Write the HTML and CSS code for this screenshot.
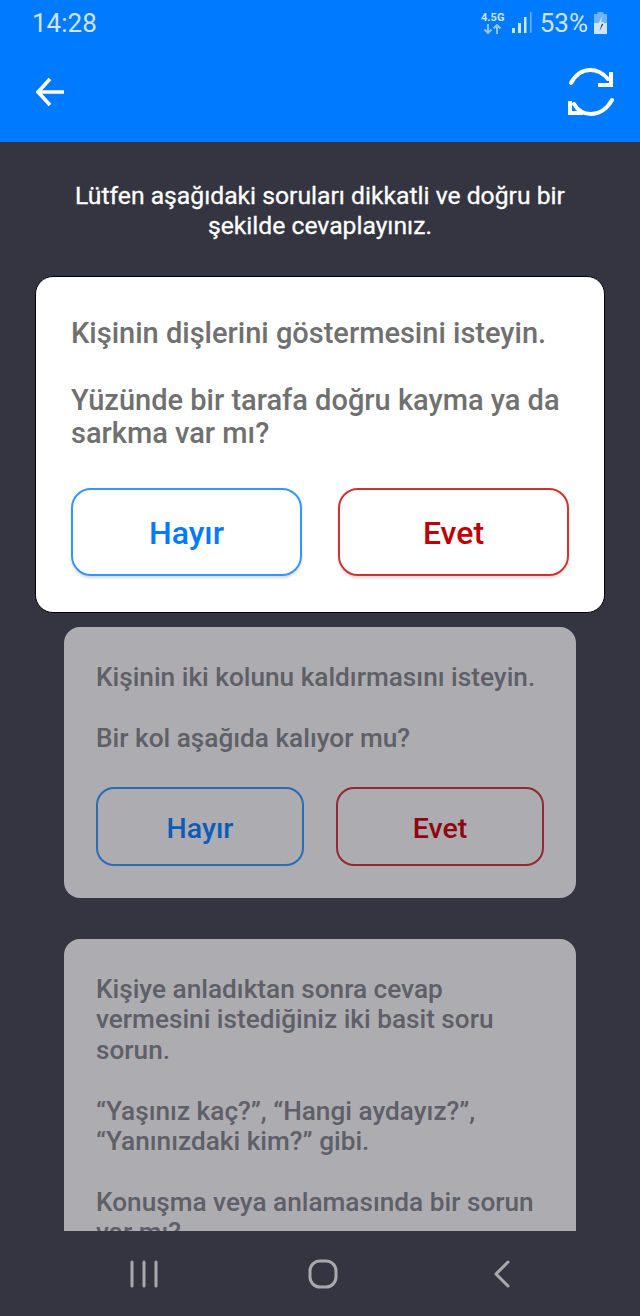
FILE: index.html
```html
<!DOCTYPE html>
<html lang="tr">
<head>
    <meta charset="UTF-8">
    <meta name="viewport" content="width=device-width, initial-scale=1.0">
    <title>Sorular</title>
    <link rel="stylesheet" href="styles.css">
</head>
<body>
    <div class="screen">
        <div class="top">
            <div class="status">
                <span class="time">14:28</span>
                <div class="status-right">
                    <div class="net">
                        <span class="net-label">4.5G</span>
                        <svg class="net-arrows" width="20" height="10" viewBox="0 0 20 10">
                            <path d="M5 0v9M1.500 5.500L5 9l3.500-3.500M14 10V1M10.500 4.500L14 1l3.500 3.500" fill="none" stroke="#8fc4ff" stroke-width="2"/>
                        </svg>
                    </div>
                    <svg class="signal" width="20" height="22" viewBox="0 0 20 22">
                        <rect x="0" y="16" width="3" height="5" fill="#cfe5ff"/>
                        <rect x="6" y="11" width="3" height="10" fill="#cfe5ff"/>
                        <rect x="12" y="5" width="2.500" height="16" fill="#cfe5ff"/>
                        <rect x="18" y="0" width="1.500" height="21" fill="#6fb2ff"/>
                    </svg>
                    <span class="battery-num">53%</span>
                    <svg class="battery" width="13" height="22" viewBox="0 0 13 22">
                        <rect x="3.500" y="0" width="6" height="2" fill="#6fb2ff"/>
                        <rect x="0" y="2" width="13" height="20" fill="#6fb2ff"/>
                        <rect x="0" y="11" width="13" height="11" fill="#cfe5ff"/>
                        <path d="M8.500 4L4 12h3l-2 7 5-9H7z" fill="#cfe5ff"/>
                        <path d="M8 11.500L5.500 19 9 12.500z" fill="#1a1a2a"/>
                    </svg>
                </div>
            </div>
            <div class="toolbar">
                <svg class="back" width="30" height="30" viewBox="0 0 30 30">
                    <path d="M2 15h26M14 2L2 15l12 13" fill="none" stroke="#fff" stroke-width="3.500"/>
                </svg>
                <svg class="refresh" width="46" height="50" viewBox="0 0 46 50">
                    <path d="M3 16C8 7 15 3 22 3c7 0 13 3 18 9" fill="none" stroke="#fff" stroke-width="4" stroke-linecap="round"/>
                    <path d="M43 5v13H30" fill="none" stroke="#fff" stroke-width="4"/>
                    <path d="M44 33c-5 9-13 14-21 14-7 0-13-3-17-10" fill="none" stroke="#fff" stroke-width="4" stroke-linecap="round"/>
                    <path d="M2 34v12h13" fill="none" stroke="#fff" stroke-width="4"/>
                </svg>
            </div>
        </div>

        <div class="content">
            <p class="intro">Lütfen aşağıdaki soruları dikkatli ve doğru bir şekilde cevaplayınız.</p>

            <div class="card card-active">
                <p class="question">Kişinin dişlerini göstermesini isteyin.</p>
                <p class="question">Yüzünde bir tarafa doğru kayma ya da sarkma var mı?</p>
                <div class="btns">
                    <div class="btn btn-no">Hayır</div>
                    <div class="btn btn-yes">Evet</div>
                </div>
            </div>

            <div class="card card-dim card-two">
                <p class="question">Kişinin iki kolunu kaldırmasını isteyin.</p>
                <p class="question">Bir kol aşağıda kalıyor mu?</p>
                <div class="btns">
                    <div class="btn btn-no">Hayır</div>
                    <div class="btn btn-yes">Evet</div>
                </div>
            </div>

            <div class="card card-dim card-three">
                <p class="question">Kişiye anladıktan sonra cevap vermesini istediğiniz iki basit soru sorun.</p>
                <p class="question">“Yaşınız kaç?”, “Hangi aydayız?”, “Yanınızdaki kim?” gibi.</p>
                <p class="question">Konuşma veya anlamasında bir sorun var mı?</p>
            </div>
        </div>

        <div class="navbar">
            <svg width="28" height="28" viewBox="0 0 28 28">
                <path d="M2 2v24M14 2v24M26 2v24" fill="none" stroke="#a9a9ad" stroke-width="3" stroke-linecap="round"/>
            </svg>
            <svg class="nav-home" width="30" height="30" viewBox="0 0 30 30">
                <rect x="2" y="2" width="26" height="26" rx="10" fill="none" stroke="#a9a9ad" stroke-width="3"/>
            </svg>
            <svg width="18" height="28" viewBox="0 0 18 28">
                <path d="M15 2L3 14l12 12" fill="none" stroke="#a9a9ad" stroke-width="3" stroke-linecap="round" stroke-linejoin="round"/>
            </svg>
        </div>
    </div>
</body>
</html>
```

FILE: styles.css
```css
*{
    margin: 0;
    padding: 0;
    box-sizing: border-box;
}
body{
    background-color: #343541;
    font-family: Roboto, "Noto Sans", sans-serif;
}
.screen{
    width: 640px;
    height: 1316px;
    display: flex;
    flex-direction: column;
    overflow: hidden;
}
.top{
    height: 142px;
    background-color: #007aff;
    flex-shrink: 0;
}
.status{
    height: 46px;
    padding: 0 33px 0 32px;
    display: flex;
    justify-content: space-between;
    align-items: center;
}
.time{
    font-size: 26px;
    color: #cfe5ff;
}
.status-right{
    display: flex;
    align-items: center;
}
.net{
    width: 22px;
    display: flex;
    flex-direction: column;
    align-items: center;
    margin-right: 8px;
}
.net-label{
    font-size: 11px;
    line-height: 12px;
    font-weight: 700;
    color: #cfe5ff;
    white-space: nowrap;
}
.signal{
    margin-right: 8px;
}
.battery-num{
    font-size: 26px;
    color: #cfe5ff;
    margin-right: 6px;
}
.toolbar{
    height: 96px;
    padding: 0 26px 4px 36px;
    display: flex;
    justify-content: space-between;
    align-items: center;
}
.content{
    flex: 1;
    min-height: 0;
    overflow: hidden;
    display: flex;
    flex-direction: column;
    align-items: center;
    padding-top: 39px;
}
.intro{
    width: 510px;
    font-size: 24.700px;
    line-height: 30px;
    color: #fff;
    text-align: center;
    -webkit-text-stroke: 0.3px #fff;
}
.card{
    flex-shrink: 0;
}
.card-active{
    width: 570px;
    height: 337px;
    margin-top: 35px;
    padding: 40px 35px 36px;
    background-color: #fff;
    border: 1px solid #000;
    border-radius: 18px;
}
.card-active .question{
    font-size: 29px;
    line-height: 33px;
    font-weight: 500;
    color: #707070;
}
.card-active .question + .question{
    margin-top: 34px;
}
.card-active .btns{
    margin-top: 38px;
    gap: 36px;
}
.card-active .btn{
    height: 88px;
    font-size: 32px;
    padding-top: 2px;
    border-radius: 20px;
}
.card-dim{
    width: 512px;
    background-color: #adacb1;
    border-radius: 16px;
    padding: 0 32px;
}
.card-dim .question{
    font-size: 26.200px;
    line-height: 30.400px;
    font-weight: 500;
    color: #5f5f67;
}
.card-dim .question + .question{
    margin-top: 30.400px;
}
.card-two{
    height: 271px;
    margin-top: 14px;
    padding-top: 35px;
}
.card-three{
    height: 400px;
    margin-top: 41px;
    padding-top: 35px;
}
.btns{
    display: flex;
    gap: 32px;
    margin-top: 34px;
}
.btn{
    flex: 1;
    height: 79px;
    padding-top: 3px;
    display: flex;
    align-items: center;
    justify-content: center;
    font-size: 28.500px;
    font-weight: 500;
    border-radius: 18px;
    border: 2px solid;
}
.btn-no{
    color: #007aff;
    border-color: rgba(0,122,255,.8);
    box-shadow: 0 2px 3px rgba(0,0,0,.15);
}
.btn-yes{
    color: #c00000;
    border-color: rgba(192,0,0,.8);
    box-shadow: 0 2px 3px rgba(0,0,0,.15);
}
.card-dim .btn-no{
    color: #0a5cb8;
    border-color: rgba(10,92,184,.8);
    box-shadow: none;
}
.card-dim .btn-yes{
    color: #8e0710;
    border-color: rgba(142,7,16,.8);
    box-shadow: none;
}
.navbar{
    height: 85px;
    flex-shrink: 0;
    background-color: #343541;
    display: flex;
    align-items: center;
    justify-content: space-between;
    padding: 0 129px 0 130px;
}
.nav-home{
    margin-right: 6px;
}
```
